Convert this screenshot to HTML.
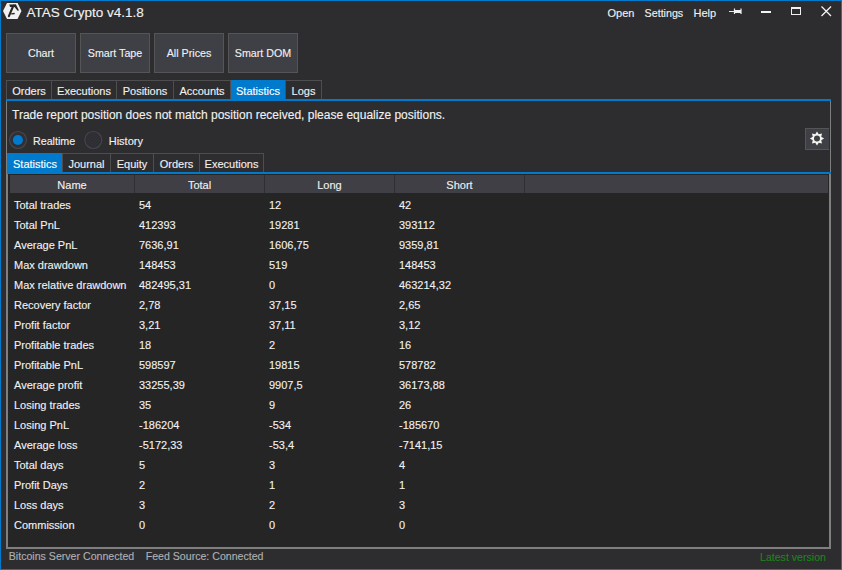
<!DOCTYPE html>
<html><head><meta charset="utf-8"><style>
html,body{margin:0;padding:0;width:842px;height:570px;overflow:hidden;background:#2d2d30;}
.a{position:absolute;}
.t{position:absolute;-webkit-text-stroke:0.12px currentColor;white-space:nowrap;line-height:1;font-family:"Liberation Sans", sans-serif;color:#f1f1f1;}
</style></head><body>
<div class="a" style="left:0px;top:0px;width:842px;height:570px;background:#2d2d30;box-sizing:border-box;border:1px solid #007acc;"></div>
<svg class="a" style="left:0;top:0" width="26" height="24" viewBox="0 0 26 24">
<polygon points="7,3 17.6,3 21.5,11 17.5,19.1 7,19.1 3,11" fill="#f0f0f0"/>
<polygon points="9.2,4.6 16.0,4.6 15.2,7.0 10.1,7.0" fill="#262626"/>
<path d="M13.4,5.5 L8.9,16.2" stroke="#262626" stroke-width="2.1" fill="none" stroke-linecap="round"/>
<polygon points="14.6,4.6 16.0,4.6 18.9,10.3 17.9,10.9 14.2,6.8" fill="#262626"/>
<path d="M11.2,13.9 L14.7,13.5" stroke="#262626" stroke-width="1.3" fill="none"/>
</svg>
<div class="t" style="left:26.5px;top:5.77px;font-size:13.5px;color:#f1f1f1;">ATAS Crypto v4.1.8</div>
<div class="t" style="left:607.5px;top:7.69px;font-size:11px;color:#f1f1f1;">Open</div>
<div class="t" style="left:644.6px;top:7.94px;font-size:10.7px;color:#f1f1f1;">Settings</div>
<div class="t" style="left:693.5px;top:7.69px;font-size:11px;color:#f1f1f1;">Help</div>
<svg class="a" style="left:720;top:0" width="122" height="28" viewBox="720 0 122 28">
<path d="M729,11.5 H735" stroke="#e8e8e8" stroke-width="1" />
<path d="M734.5,8.5 V14 M741,8.5 V14" stroke="#f0f0f0" stroke-width="1.2"/>
<rect x="734.5" y="10" width="6.5" height="3" fill="#f0f0f0"/>
<rect x="761" y="11" width="10" height="2" fill="#f4f4f4"/>
<rect x="791.5" y="7.5" width="9" height="7" fill="none" stroke="#f0f0f0" stroke-width="1"/>
<rect x="791" y="7" width="10" height="2" fill="#f0f0f0"/>
<path d="M821.5,6.5 L831,16 M831,6.5 L821.5,16" stroke="#f4f4f4" stroke-width="1.3"/>
</svg>
<div class="a" style="left:6px;top:33px;width:70px;height:40px;background:#3f3f46;box-sizing:border-box;border:1px solid #555555;"></div>
<div class="t" style="left:-109px;width:300px;text-align:center;top:47.94px;font-size:10.7px;color:#f1f1f1;">Chart</div>
<div class="a" style="left:80px;top:33px;width:70px;height:40px;background:#3f3f46;box-sizing:border-box;border:1px solid #555555;"></div>
<div class="t" style="left:-35px;width:300px;text-align:center;top:47.94px;font-size:10.7px;color:#f1f1f1;">Smart Tape</div>
<div class="a" style="left:154px;top:33px;width:70px;height:40px;background:#3f3f46;box-sizing:border-box;border:1px solid #555555;"></div>
<div class="t" style="left:39px;width:300px;text-align:center;top:47.94px;font-size:10.7px;color:#f1f1f1;">All Prices</div>
<div class="a" style="left:228px;top:33px;width:70px;height:40px;background:#3f3f46;box-sizing:border-box;border:1px solid #555555;"></div>
<div class="t" style="left:113px;width:300px;text-align:center;top:47.94px;font-size:10.7px;color:#f1f1f1;">Smart DOM</div>
<div class="a" style="left:6px;top:80px;width:46px;height:19px;box-sizing:border-box;border:1px solid #4e4e50;border-bottom:none;"></div>
<div class="t" style="left:-121.0px;width:300px;text-align:center;top:85.69px;font-size:11px;color:#f1f1f1;">Orders</div>
<div class="a" style="left:51px;top:80px;width:66px;height:19px;box-sizing:border-box;border:1px solid #4e4e50;border-bottom:none;"></div>
<div class="t" style="left:-66.0px;width:300px;text-align:center;top:85.69px;font-size:11px;color:#f1f1f1;">Executions</div>
<div class="a" style="left:116px;top:80px;width:58px;height:19px;box-sizing:border-box;border:1px solid #4e4e50;border-bottom:none;"></div>
<div class="t" style="left:-5.0px;width:300px;text-align:center;top:85.69px;font-size:11px;color:#f1f1f1;">Positions</div>
<div class="a" style="left:173px;top:80px;width:58px;height:19px;box-sizing:border-box;border:1px solid #4e4e50;border-bottom:none;"></div>
<div class="t" style="left:52.0px;width:300px;text-align:center;top:85.69px;font-size:11px;color:#f1f1f1;">Accounts</div>
<div class="a" style="left:231px;top:80px;width:54px;height:19px;background:#007acc;"></div>
<div class="t" style="left:108.0px;width:300px;text-align:center;top:85.69px;font-size:11px;color:#ffffff;">Statistics</div>
<div class="a" style="left:285px;top:80px;width:37px;height:19px;box-sizing:border-box;border:1px solid #4e4e50;border-bottom:none;"></div>
<div class="t" style="left:153.5px;width:300px;text-align:center;top:85.69px;font-size:11px;color:#f1f1f1;">Logs</div>
<div class="a" style="left:6px;top:99px;width:825px;height:2px;background:#007acc;"></div>
<div class="a" style="left:6px;top:101px;width:1px;height:448px;background:#7f7f7f;"></div>
<div class="a" style="left:830px;top:101px;width:1px;height:448px;background:#7f7f7f;"></div>
<div class="a" style="left:6px;top:548px;width:825px;height:1px;background:#7f7f7f;"></div>
<div class="t" style="left:12px;top:108.84px;font-size:12px;color:#f1f1f1;">Trade report position does not match position received, please equalize positions.</div>
<svg class="a" style="left:0;top:120" width="120" height="40" viewBox="0 120 120 40">
<defs><clipPath id="rc"><circle cx="93.3" cy="140" r="8"/></clipPath>
<pattern id="hp" width="2.2" height="2.2" patternUnits="userSpaceOnUse" patternTransform="rotate(45)"><rect width="1" height="2.2" fill="#34343a"/></pattern></defs>
<circle cx="18" cy="140" r="8.5" fill="#2f2f33" stroke="#47474f" stroke-width="1.1"/>
<circle cx="18" cy="140" r="7" fill="none" stroke="#38383e" stroke-width="1" stroke-dasharray="1 1.2"/>
<circle cx="17.9" cy="140" r="5.1" fill="#007acc"/>
<circle cx="93.3" cy="140" r="8.5" fill="#2a2a2f" stroke="#47474f" stroke-width="1.1"/>
<circle cx="93.3" cy="140" r="7.5" fill="url(#hp)"/>
</svg>
<div class="t" style="left:33px;top:135.94px;font-size:10.7px;color:#f1f1f1;">Realtime</div>
<div class="t" style="left:108.7px;top:135.69px;font-size:11px;color:#f1f1f1;">History</div>
<div class="a" style="left:805px;top:128px;width:24px;height:22px;background:#3f3f46;box-sizing:border-box;border:1px solid #555555;border-right:none;"></div>
<svg class="a" style="left:800;top:125" width="34" height="28" viewBox="800 125 34 28">
<polygon points="824.10,138.50 821.25,140.26 822.02,143.52 818.76,142.75 817.00,145.60 815.24,142.75 811.98,143.52 812.75,140.26 809.90,138.50 812.75,136.74 811.98,133.48 815.24,134.25 817.00,131.40 818.76,134.25 822.02,133.48 821.25,136.74" fill="#f4f4f0"/>
<circle cx="817" cy="138.5" r="3.0" fill="#3f3f46"/>
</svg>
<div class="a" style="left:7px;top:153px;width:55px;height:20px;background:#007acc;"></div>
<div class="t" style="left:-115.0px;width:300px;text-align:center;top:158.69px;font-size:11px;color:#ffffff;">Statistics</div>
<div class="a" style="left:62px;top:153px;width:49px;height:19px;box-sizing:border-box;border:1px solid #4e4e50;border-bottom:none;"></div>
<div class="t" style="left:-63.5px;width:300px;text-align:center;top:158.69px;font-size:11px;color:#f1f1f1;">Journal</div>
<div class="a" style="left:110px;top:153px;width:44px;height:19px;box-sizing:border-box;border:1px solid #4e4e50;border-bottom:none;"></div>
<div class="t" style="left:-18.0px;width:300px;text-align:center;top:158.69px;font-size:11px;color:#f1f1f1;">Equity</div>
<div class="a" style="left:153px;top:153px;width:47px;height:19px;box-sizing:border-box;border:1px solid #4e4e50;border-bottom:none;"></div>
<div class="t" style="left:26.5px;width:300px;text-align:center;top:158.69px;font-size:11px;color:#f1f1f1;">Orders</div>
<div class="a" style="left:199px;top:153px;width:65px;height:19px;box-sizing:border-box;border:1px solid #4e4e50;border-bottom:none;"></div>
<div class="t" style="left:81.5px;width:300px;text-align:center;top:158.69px;font-size:11px;color:#f1f1f1;">Executions</div>
<div class="a" style="left:7px;top:172px;width:824px;height:2px;background:#007acc;"></div>
<div class="a" style="left:7px;top:174px;width:1px;height:374px;background:#7f7f7f;"></div>
<div class="a" style="left:829px;top:174px;width:1px;height:374px;background:#7f7f7f;"></div>
<div class="a" style="left:7px;top:547px;width:823px;height:1px;background:#7f7f7f;"></div>
<div class="a" style="left:8px;top:174px;width:821px;height:373px;background:#252526;"></div>
<div class="a" style="left:10px;top:175px;width:818px;height:18px;background:#3f3f45;"></div>
<div class="a" style="left:134px;top:175px;width:1px;height:18px;background:#2e2e33;"></div>
<div class="a" style="left:264px;top:175px;width:1px;height:18px;background:#2e2e33;"></div>
<div class="a" style="left:394px;top:175px;width:1px;height:18px;background:#2e2e33;"></div>
<div class="a" style="left:524px;top:175px;width:1px;height:18px;background:#2e2e33;"></div>
<div class="t" style="left:-78px;width:300px;text-align:center;top:179.69px;font-size:11px;color:#f1f1f1;">Name</div>
<div class="t" style="left:49.5px;width:300px;text-align:center;top:179.69px;font-size:11px;color:#f1f1f1;">Total</div>
<div class="t" style="left:179.5px;width:300px;text-align:center;top:179.69px;font-size:11px;color:#f1f1f1;">Long</div>
<div class="t" style="left:309.5px;width:300px;text-align:center;top:179.69px;font-size:11px;color:#f1f1f1;">Short</div>
<div class="t" style="left:14px;top:199.69px;font-size:11px;color:#f1f1f1;">Total trades</div>
<div class="t" style="left:139px;top:199.69px;font-size:11px;color:#f1f1f1;">54</div>
<div class="t" style="left:269px;top:199.69px;font-size:11px;color:#f1f1f1;">12</div>
<div class="t" style="left:399px;top:199.69px;font-size:11px;color:#f1f1f1;">42</div>
<div class="t" style="left:14px;top:219.69px;font-size:11px;color:#f1f1f1;">Total PnL</div>
<div class="t" style="left:139px;top:219.69px;font-size:11px;color:#f1f1f1;">412393</div>
<div class="t" style="left:269px;top:219.69px;font-size:11px;color:#f1f1f1;">19281</div>
<div class="t" style="left:399px;top:219.69px;font-size:11px;color:#f1f1f1;">393112</div>
<div class="t" style="left:14px;top:239.69px;font-size:11px;color:#f1f1f1;">Average PnL</div>
<div class="t" style="left:139px;top:239.69px;font-size:11px;color:#f1f1f1;">7636,91</div>
<div class="t" style="left:269px;top:239.69px;font-size:11px;color:#f1f1f1;">1606,75</div>
<div class="t" style="left:399px;top:239.69px;font-size:11px;color:#f1f1f1;">9359,81</div>
<div class="t" style="left:14px;top:259.69px;font-size:11px;color:#f1f1f1;">Max drawdown</div>
<div class="t" style="left:139px;top:259.69px;font-size:11px;color:#f1f1f1;">148453</div>
<div class="t" style="left:269px;top:259.69px;font-size:11px;color:#f1f1f1;">519</div>
<div class="t" style="left:399px;top:259.69px;font-size:11px;color:#f1f1f1;">148453</div>
<div class="t" style="left:14px;top:279.69px;font-size:11px;color:#f1f1f1;">Max relative drawdown</div>
<div class="t" style="left:139px;top:279.69px;font-size:11px;color:#f1f1f1;">482495,31</div>
<div class="t" style="left:269px;top:279.69px;font-size:11px;color:#f1f1f1;">0</div>
<div class="t" style="left:399px;top:279.69px;font-size:11px;color:#f1f1f1;">463214,32</div>
<div class="t" style="left:14px;top:299.69px;font-size:11px;color:#f1f1f1;">Recovery factor</div>
<div class="t" style="left:139px;top:299.69px;font-size:11px;color:#f1f1f1;">2,78</div>
<div class="t" style="left:269px;top:299.69px;font-size:11px;color:#f1f1f1;">37,15</div>
<div class="t" style="left:399px;top:299.69px;font-size:11px;color:#f1f1f1;">2,65</div>
<div class="t" style="left:14px;top:319.69px;font-size:11px;color:#f1f1f1;">Profit factor</div>
<div class="t" style="left:139px;top:319.69px;font-size:11px;color:#f1f1f1;">3,21</div>
<div class="t" style="left:269px;top:319.69px;font-size:11px;color:#f1f1f1;">37,11</div>
<div class="t" style="left:399px;top:319.69px;font-size:11px;color:#f1f1f1;">3,12</div>
<div class="t" style="left:14px;top:339.69px;font-size:11px;color:#f1f1f1;">Profitable trades</div>
<div class="t" style="left:139px;top:339.69px;font-size:11px;color:#f1f1f1;">18</div>
<div class="t" style="left:269px;top:339.69px;font-size:11px;color:#f1f1f1;">2</div>
<div class="t" style="left:399px;top:339.69px;font-size:11px;color:#f1f1f1;">16</div>
<div class="t" style="left:14px;top:359.69px;font-size:11px;color:#f1f1f1;">Profitable PnL</div>
<div class="t" style="left:139px;top:359.69px;font-size:11px;color:#f1f1f1;">598597</div>
<div class="t" style="left:269px;top:359.69px;font-size:11px;color:#f1f1f1;">19815</div>
<div class="t" style="left:399px;top:359.69px;font-size:11px;color:#f1f1f1;">578782</div>
<div class="t" style="left:14px;top:379.69px;font-size:11px;color:#f1f1f1;">Average profit</div>
<div class="t" style="left:139px;top:379.69px;font-size:11px;color:#f1f1f1;">33255,39</div>
<div class="t" style="left:269px;top:379.69px;font-size:11px;color:#f1f1f1;">9907,5</div>
<div class="t" style="left:399px;top:379.69px;font-size:11px;color:#f1f1f1;">36173,88</div>
<div class="t" style="left:14px;top:399.69px;font-size:11px;color:#f1f1f1;">Losing trades</div>
<div class="t" style="left:139px;top:399.69px;font-size:11px;color:#f1f1f1;">35</div>
<div class="t" style="left:269px;top:399.69px;font-size:11px;color:#f1f1f1;">9</div>
<div class="t" style="left:399px;top:399.69px;font-size:11px;color:#f1f1f1;">26</div>
<div class="t" style="left:14px;top:419.69px;font-size:11px;color:#f1f1f1;">Losing PnL</div>
<div class="t" style="left:139px;top:419.69px;font-size:11px;color:#f1f1f1;">-186204</div>
<div class="t" style="left:269px;top:419.69px;font-size:11px;color:#f1f1f1;">-534</div>
<div class="t" style="left:399px;top:419.69px;font-size:11px;color:#f1f1f1;">-185670</div>
<div class="t" style="left:14px;top:439.69px;font-size:11px;color:#f1f1f1;">Average loss</div>
<div class="t" style="left:139px;top:439.69px;font-size:11px;color:#f1f1f1;">-5172,33</div>
<div class="t" style="left:269px;top:439.69px;font-size:11px;color:#f1f1f1;">-53,4</div>
<div class="t" style="left:399px;top:439.69px;font-size:11px;color:#f1f1f1;">-7141,15</div>
<div class="t" style="left:14px;top:459.69px;font-size:11px;color:#f1f1f1;">Total days</div>
<div class="t" style="left:139px;top:459.69px;font-size:11px;color:#f1f1f1;">5</div>
<div class="t" style="left:269px;top:459.69px;font-size:11px;color:#f1f1f1;">3</div>
<div class="t" style="left:399px;top:459.69px;font-size:11px;color:#f1f1f1;">4</div>
<div class="t" style="left:14px;top:479.69px;font-size:11px;color:#f1f1f1;">Profit Days</div>
<div class="t" style="left:139px;top:479.69px;font-size:11px;color:#f1f1f1;">2</div>
<div class="t" style="left:269px;top:479.69px;font-size:11px;color:#f1f1f1;">1</div>
<div class="t" style="left:399px;top:479.69px;font-size:11px;color:#f1f1f1;">1</div>
<div class="t" style="left:14px;top:499.69px;font-size:11px;color:#f1f1f1;">Loss days</div>
<div class="t" style="left:139px;top:499.69px;font-size:11px;color:#f1f1f1;">3</div>
<div class="t" style="left:269px;top:499.69px;font-size:11px;color:#f1f1f1;">2</div>
<div class="t" style="left:399px;top:499.69px;font-size:11px;color:#f1f1f1;">3</div>
<div class="t" style="left:14px;top:519.69px;font-size:11px;color:#f1f1f1;">Commission</div>
<div class="t" style="left:139px;top:519.69px;font-size:11px;color:#f1f1f1;">0</div>
<div class="t" style="left:269px;top:519.69px;font-size:11px;color:#f1f1f1;">0</div>
<div class="t" style="left:399px;top:519.69px;font-size:11px;color:#f1f1f1;">0</div>
<div class="t" style="left:8.8px;top:551.03px;font-size:10.6px;color:#b0b0b0;">Bitcoins Server Connected</div>
<div class="t" style="left:145.7px;top:551.03px;font-size:10.6px;color:#b0b0b0;">Feed Source: Connected</div>
<div class="t" style="left:760px;top:552.03px;font-size:10.6px;color:#1b851b;">Latest version</div>
</body></html>
